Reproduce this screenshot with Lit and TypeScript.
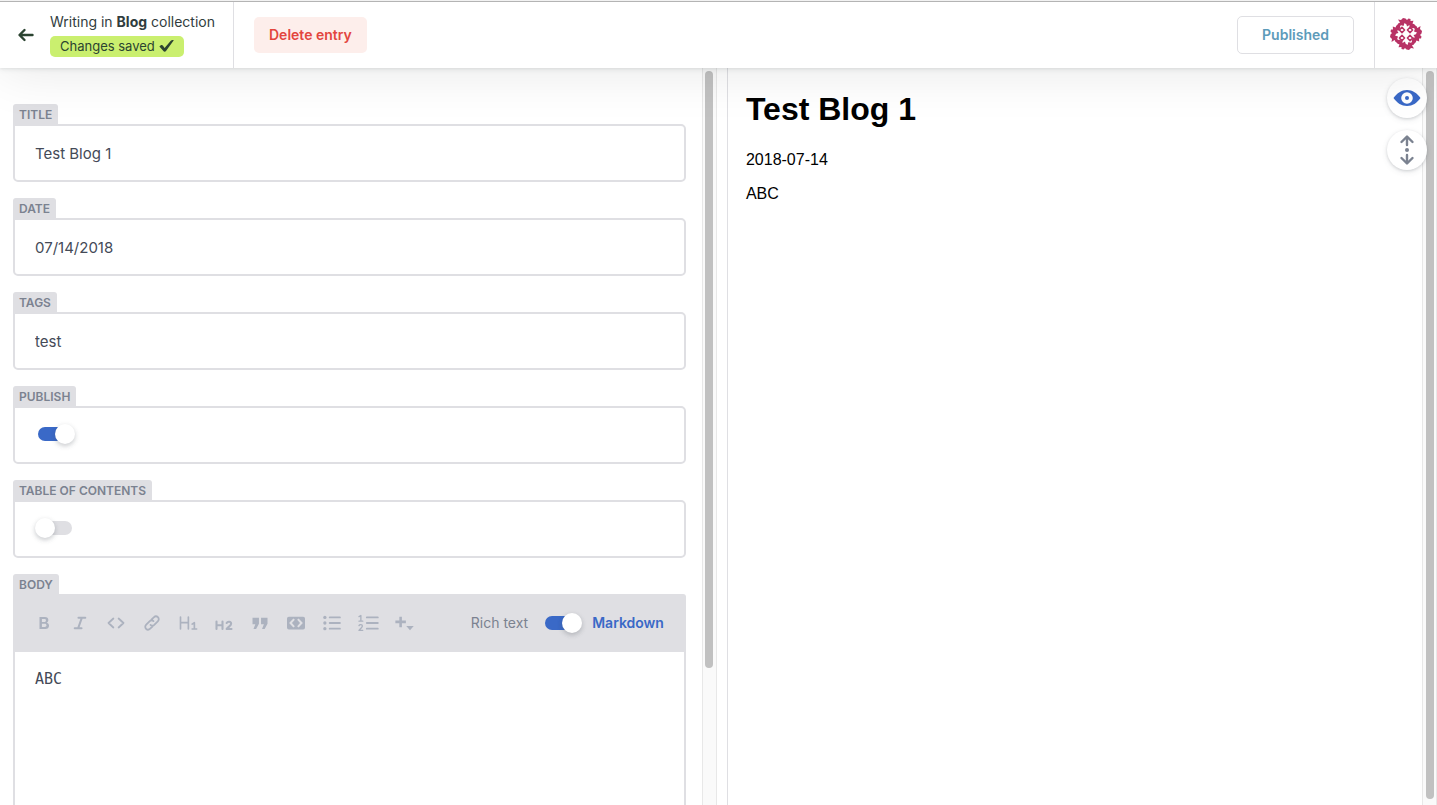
import { LitElement, html, css, svg } from "lit";
import { customElement, property, state } from "lit/decorators.js";

const icon = (size: number, body: unknown) => html`
  <svg width=${size} height=${size} viewBox="0 0 24 24" fill="currentColor" aria-hidden="true">${body}</svg>
`;

const line = (d: string, w = 2) =>
  svg`<path d=${d} fill="none" stroke="currentColor" stroke-width=${w} stroke-linecap="round" stroke-linejoin="round"/>`;

const tools = [
  { name: "Bold", body: svg`<path fill-rule="evenodd" d="M6 4h7.2c3 0 4.6 1.7 4.6 4.1 0 1.600-.8 2.900-2.100 3.500 1.900.5 3 2 3 4 0 2.700-1.900 4.400-5 4.400H6zM9.200 6.700v3.900h3.200c1.400 0 2.200-.7 2.200-2s-.8-1.900-2.200-1.900zm0 6.300v4.300h3.600c1.700 0 2.500-.8 2.500-2.200S14.500 13 12.800 13z"/>` },
  { name: "Italic", body: line("M10 5h9M5 19h9M14.500 5l-5 14", 2.8) },
  { name: "Code", body: line("M8.500 6L2 12l6.500 6M15.500 6l6.500 6-6.500 6", 2.4) },
  { name: "Link", body: line("M10 14.500c1.600 1.600 3.600 1.300 5 0l4.700-4.700c1.700-1.700 1.700-4 .2-5.500s-3.800-1.500-5.500.2L11.500 7.300M14 9.500c-1.600-1.600-3.600-1.300-5 0l-4.700 4.700c-1.700 1.700-1.700 4-.2 5.500s3.800 1.500 5.500-.2l2.900-2.800", 2.4) },
  { name: "Header 1", body: line("M2 4v16M12.500 4v16M2 11.500h10.500M17.500 13.500l3-2v8.500M17.500 20h6", 2.2) },
  { name: "Header 2", body: line("M2 10v10M10 10v10M2 15h8M15.500 12c1.500-2.500 6-2 6 1 0 2.500-3 3.500-6 7h6.500", 2.8) },
  { name: "Quote", body: svg`<path d="M2 5h8.600v8L6.800 20H3.300l2.500-6.500H2zM13.400 5H22v8l-3.800 7h-3.500l2.500-6.500h-3.800z"/>` },
  { name: "Code Block", body: svg`<path fill-rule="evenodd" d="M2.500 3.500h19A2.500 2.500 0 0 1 24 6v12a2.500 2.500 0 0 1-2.500 2.500h-19A2.500 2.500 0 0 1 0 18V6a2.500 2.500 0 0 1 2.500-2.500zM8.500 6L2.800 12l5.700 6 2-1.800L6.600 12l3.900-4.200zm7 0l-2 1.800 3.900 4.200-3.900 4.200 2 1.800 5.700-6z"/>` },
  { name: "Bulleted List", body: svg`<circle cx="2.500" cy="4.500" r="2.200"/><circle cx="2.500" cy="12" r="2.200"/><circle cx="2.500" cy="19.500" r="2.200"/>${line("M9 4.500h13.500M9 12h13.500M9 19.500h13.500", 2.6)}` },
  { name: "Numbered List", body: svg`${line("M0 3.500L2.500 2v7.500M0 9.500h5", 1.8)}${line("M0 15.500c.8-2 4.500-1.800 4.500.5 0 1.700-2.300 3-4.500 5.800h5", 1.8)}${line("M10.500 4.500h14.500M10.500 12h14.500M10.500 19.500h14.500", 2.6)}` },
  { name: "Add Component", body: svg`<path d="M5.800 3.500h3.400v5.300h5.300v3.400H9.200v5.300H5.800v-5.300H.5V8.800h5.300zM15 16h10l-5 5.500z"/>` },
];

@customElement("cms-toggle")
class CmsToggle extends LitElement {
  @property({ type: Boolean }) checked = false;
  @property() label = "";

  static styles = css`
    :host { display: inline-flex; }
    .toggle {
      appearance: none;
      width: 40px;
      height: 20px;
      margin: 0;
      display: grid;
      align-items: center;
      cursor: pointer;
    }
    .toggle::before, .toggle::after { content: ""; grid-area: 1 / 1; }
    .toggle::before { height: 14px; margin: 0 3px; border-radius: 7px; background: #dfdfe3; }
    .toggle::after {
      width: 20px;
      height: 20px;
      border-radius: 50%;
      background: #fff;
      box-shadow: 0 2px 6px rgba(68, 74, 87, 0.1), 0 2px 4px rgba(68, 74, 87, 0.2);
    }
    .toggle:checked::before { background: #3a69c7; }
    .toggle:checked::after { justify-self: end; }
  `;

  render() {
    return html`<input class="toggle" type="checkbox" role="switch" aria-label=${this.label} .checked=${this.checked}
      @change=${(e: Event) => (this.checked = (e.target as HTMLInputElement).checked)} />`;
  }
}

@customElement("app-root")
class AppRoot extends LitElement {
  @state() private entryTitle = "Test Blog 1";
  @state() private date = "07/14/2018";
  @state() private body = "ABC";

  static styles = css`
    :host {
      display: flex;
      flex-direction: column;
      height: 100vh;
      overflow: hidden;
      background: #fff;
      color: #313d3e;
      font-family: Inter, Roboto, sans-serif;
      font-size: 14px;
    }
    *, *::before, *::after { box-sizing: border-box; }
    button { font: inherit; border: 0; cursor: pointer; }
    svg { display: block; overflow: visible; }

    .header {
      position: relative;
      z-index: 1;
      display: flex;
      flex: none;
      height: 68px;
      background: #fff;
      border-top: 1px solid #f2f2f2;
      box-shadow: 0 2px 6px rgba(68, 74, 87, 0.05), 0 1px 3px rgba(68, 74, 87, 0.1), 0 2px 54px rgba(0, 0, 0, 0.1);
    }
    .bar { display: flex; flex: 1; border-top: 1px solid #b4b4b4; }
    .back {
      display: flex;
      align-items: center;
      gap: 16px;
      padding: 0 18px 0 18px;
      border-right: 1px solid #dfdfe3;
      color: #2b4431;
      text-decoration: none;
    }
    .where { color: #313d3e; line-height: 20px; margin-bottom: 4px; white-space: nowrap; }
    .status { padding-bottom: 2px; }
    .state {
      display: flex;
      width: fit-content;
      align-items: center;
      gap: 4px;
      height: 21px;
      padding: 0 10px;
      border-radius: 5px;
      background: #caef6f;
      color: #2b4431;
      font-size: 13px;
      white-space: nowrap;
    }
    .actions { display: flex; flex: 1; align-items: center; justify-content: space-between; padding: 0 20px; }
    .delete, .published { padding-top: 0; padding-bottom: 2px; border-radius: 5px; font-weight: 600; }
    .delete { height: 36px; padding-left: 15px; padding-right: 15px; background: #fdeeeb; color: #e3453e; }
    .published { height: 38px; padding-left: 24px; padding-right: 24px; border: 1px solid #dfdfe3; background: #fff; color: #5d9bba; }
    .user { display: flex; align-items: center; padding: 0 15px 2px; background: #fff; border-left: 1px solid #dfdfe3; }

    .panes { flex: 1; min-height: 0; display: grid; grid-template-columns: 91fr 11px 90fr; grid-template-rows: minmax(0, 1fr); }
    .pane { position: relative; display: flex; min-width: 0; overflow: hidden; }
    .divider { border-right: 1px solid #dfdfe3; }
    .track { flex: none; width: 15px; padding: 3px 0 6px; background: #fafafa; border: solid #e8e8e8; border-width: 0 1px; }
    .thumb { width: 8px; margin: 0 auto; border-radius: 4px; background: #c1c1c1; }
    .editor-thumb { height: 82%; }
    .preview-thumb { height: 100%; }

    .form { flex: 1; min-width: 0; display: flex; flex-direction: column; gap: 16px; padding: 36px 16px 0 13px; }
    .field { display: flex; flex-direction: column; align-items: flex-start; }
    .grow { flex: 1; min-height: 0; }
    .label {
      height: 20px;
      padding: 0 6px;
      border-radius: 3px 3px 0 0;
      background: #dfdfe3;
      color: #7b8290;
      font-size: 12px;
      font-weight: 600;
      line-height: 21px;
      text-transform: uppercase;
    }
    .box {
      width: 100%;
      height: 58px;
      padding: 0 20px;
      border: 2px solid #dfdfe3;
      border-radius: 0 5px 5px 5px;
      background: #fff;
      color: #444a57;
      font: 15px Inter, Roboto, sans-serif;
      outline: none;
    }
    .switch { padding-top: 16px; }
    .tools {
      width: 100%;
      height: 58px;
      display: flex;
      align-items: center;
      padding: 0 22px 0 13px;
      background: #dfdfe3;
      border-radius: 0 3px 0 0;
      color: #acb2bf;
    }
    .tool { display: flex; align-items: center; justify-content: center; flex: none; width: 36px; height: 36px; padding: 0; background: none; color: inherit; }
    .mode { display: flex; align-items: center; margin-left: auto; color: #7b8290; line-height: 16px; white-space: nowrap; }
    .mode cms-toggle { margin: 0 10px 0 14px; }
    .on { color: #3a69c7; font-weight: 600; }
    .text {
      display: block;
      flex: 1;
      width: 100%;
      margin: 0;
      padding: 17px 20px;
      border: solid #dfdfe3;
      border-width: 0 2px;
      resize: none;
      outline: none;
      overflow: hidden;
      color: #444a57;
      font: 15px/21px "DejaVu Sans Mono", monospace;
    }

    .preview { flex: 1; padding: 21px 18px; color: #000; font: 16px/18px "Liberation Sans", Arial, sans-serif; }
    .preview h1 { margin: 0 0 22px; font-size: 32px; line-height: 40px; }
    .preview p { margin: 0 0 16px; }
    .controls { position: absolute; top: 10px; right: 10px; display: flex; flex-direction: column; gap: 12px; }
    .round {
      display: flex;
      align-items: center;
      justify-content: center;
      width: 40px;
      height: 40px;
      padding: 0;
      border-radius: 50%;
      background: #fff;
      color: #7b8290;
      box-shadow: 0 2px 6px rgba(68, 74, 87, 0.1), 0 1px 3px rgba(68, 74, 87, 0.2);
    }
    .active { color: #3a69c7; }
  `;

  private avatar() {
    const claw = svg`
      <path d="M8 1.500l3 .5L13 0l2.500 .5L17 2l1.500-1.500L20.500 1v2l3-.2-1 2.700 1.500 2-2 2.500-2.500-.5V7L17 8.500l-.5-2L14.500 5l-1 3-3-1L8 6l2-1.500z"/>
      <path d="M6 8l3-3 2 2-1 1.500 .5 2L8 9.500 5.500 11z"/>`;
    const ring = (x: number, y: number) =>
      svg`<path d="M${x} ${y - 2.6}l2.600 2.600-2.600 2.600-2.600-2.600z" fill="#fff" stroke="#b83265" stroke-width="1.500" stroke-linejoin="round"/>`;
    return html`<svg width="32" height="32" viewBox="0 0 32 32" fill="#b83265" aria-hidden="true">
      ${[0, 90, 180, 270].map((a) => svg`<g transform="rotate(${a} 16 16)">${claw}</g>`)}
      ${ring(12, 12)}${ring(20, 12)}${ring(12, 20)}${ring(20, 20)}
    </svg>`;
  }

  render() {
    return html`
      <header class="header">
        <div class="bar">
          <a class="back" href="#">
            <svg width="16" height="14" viewBox="0 0 16 14" aria-hidden="true">${line("M6.500 2L1.500 7l5 5M2 7H14.500", 2.4)}</svg>
            <div class="status">
              <div class="where">Writing in <b>Blog</b> collection</div>
              <div class="state">Changes saved
                <svg width="15" height="12" viewBox="0 0 15 12" fill="currentColor" aria-hidden="true"><path d="M1.500 5.500c1-.8 2-.6 2.500.2L5.600 8 11.800.800C12.600 0 13.800 0 14.800.300L7 11c-.7.900-2 .9-2.600 0L.400 6.500z"/></svg>
              </div>
            </div>
          </a>
          <div class="actions">
            <button class="delete">Delete entry</button>
            <button class="published">Published</button>
          </div>
          <button class="user" aria-label="Account">${this.avatar()}</button>
        </div>
      </header>
      <main class="panes">
        <section class="pane">
          <div class="form">
            <div class="field"><label class="label" for="title">Title</label><input class="box" id="title" .value=${this.entryTitle}
              @input=${(e: Event) => (this.entryTitle = (e.target as HTMLInputElement).value)} /></div>
            <div class="field"><label class="label" for="date">Date</label><input class="box" id="date" .value=${this.date} /></div>
            <div class="field"><label class="label" for="tags">Tags</label><input class="box" id="tags" .value=${"test"} /></div>
            <div class="field"><span class="label">Publish</span><div class="box switch"><cms-toggle label="Publish" checked></cms-toggle></div></div>
            <div class="field"><span class="label">Table of contents</span><div class="box switch"><cms-toggle label="Table of contents"></cms-toggle></div></div>
            <div class="field grow">
              <label class="label" for="body">Body</label>
              <div class="tools">
                ${tools.map((t) => html`<button class="tool" title=${t.name} aria-label=${t.name}>${icon(18, t.body)}</button>`)}
                <div class="mode"><span>Rich text</span><cms-toggle label="Markdown" checked></cms-toggle><span class="on">Markdown</span></div>
              </div>
              <textarea class="text" id="body" .value=${this.body}
                @input=${(e: Event) => (this.body = (e.target as HTMLTextAreaElement).value)}></textarea>
            </div>
          </div>
          <div class="track"><div class="thumb editor-thumb"></div></div>
        </section>
        <div class="divider"></div>
        <section class="pane">
          <article class="preview">
            <h1>${this.entryTitle}</h1>
            <p>2018-07-14</p>
            <p>${this.body}</p>
          </article>
          <div class="track"><div class="thumb preview-thumb"></div></div>
          <div class="controls">
            <button class="round active" aria-label="Toggle preview">
              <svg width="28" height="18" viewBox="0 0 28 18" fill="currentColor" aria-hidden="true"><path fill-rule="evenodd" d="M.5 9C4 4 8.500 1 14 1s10 3 13.500 8c-3.500 5-8 8-13.500 8S4 14 .5 9zM14 3.200a5.800 5.800 0 1 0 0 11.600 5.800 5.800 0 0 0 0-11.600z"/><circle cx="14" cy="9" r="2" /></svg>
            </button>
            <button class="round" aria-label="Toggle scroll sync">
              <svg width="14" height="30" viewBox="0 0 14 30" fill="currentColor" aria-hidden="true">${line("M1.500 7L7 1.500 12.500 7M7 2v8M1.500 23L7 28.500 12.500 23M7 20v8", 2.4)}<circle cx="7" cy="15" r="2"/></svg>
            </button>
          </div>
        </section>
      </main>
    `;
  }
}
